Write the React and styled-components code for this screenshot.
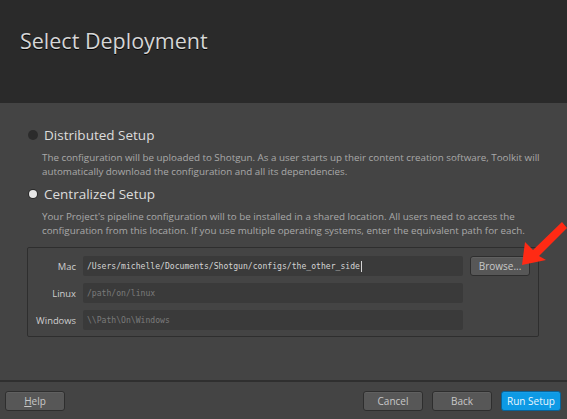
import React from "react";
import styled, { createGlobalStyle } from "styled-components";

const Global = createGlobalStyle`
  html, body { margin: 0; padding: 0; background: #444; }
  * { box-sizing: border-box; }
`;

const Window = styled.div`
  position: relative;
  width: 567px;
  height: 419px;
  display: flex;
  flex-direction: column;
  background: #444444;
  font-family: "Open Sans", "Liberation Sans", sans-serif;
  overflow: hidden;
`;

const Header = styled.header`
  height: 103px;
  flex: none;
  background: #2a2a2a;
  padding: 26px 0 0 20px;
`;

const Title = styled.h1`
  margin: 0;
  font-weight: 400;
  font-size: 21.5px;
  line-height: 30px;
  color: #d6d6d6;
  text-shadow: 0 1px 0 #000;
`;

const Body = styled.main`
  flex: 1;
  padding: 22px 28px 0 27px;
  display: flex;
  flex-direction: column;
`;

const OptionLabel = styled.label`
  display: flex;
  align-items: center;
  gap: 6px;
  font-size: 13.5px;
  line-height: 20px;
  color: #dcdcdc;
  margin-left: 1px;
`;

const Radio = styled.span`
  width: ${(p) => (p.$checked ? 8 : 10)}px;
  height: ${(p) => (p.$checked ? 8 : 10)}px;
  margin: 0 ${(p) => (p.$checked ? 1 : 0)}px;
  border-radius: 50%;
  flex: none;
  background: ${(p) => (p.$checked ? "#e6e6e6" : "#2b2b2b")};
  box-shadow: ${(p) => (p.$checked ? "0 0 0 1px #2a2a2a" : "none")};
`;

const Desc = styled.p`
  margin: 6px 0 0 15px;
  font-size: 9.8px;
  line-height: 14px;
  color: #a9a9a9;
  white-space: nowrap;
`;

const Spacer = styled.div`
  height: ${(p) => p.$h}px;
`;

const PathBox = styled.div`
  margin-top: 9px;
  border: 1px solid #2e2e2e;
  border-radius: 2px;
  padding: 8px 8px 6px 0;
  display: grid;
  grid-template-columns: 48px 1fr 60px;
  column-gap: 7px;
  row-gap: 7px;
  align-items: center;
`;

const OsLabel = styled.span`
  text-align: right;
  font-size: 9.4px;
  color: #cfcfcf;
`;

const PathInput = styled.div`
  height: 20px;
  background: #3a3a3a;
  border-radius: 2px;
  padding-left: 4px;
  display: flex;
  align-items: center;
  font-family: "DejaVu Sans Mono", "Liberation Mono", monospace;
  font-size: 8.1px;
  color: ${(p) => (p.$placeholder ? "#7a7a7a" : "#d4d4d4")};
  white-space: nowrap;
  overflow: hidden;
`;

const Caret = styled.span`
  display: inline-block;
  width: 1px;
  height: 11px;
  background: #d4d4d4;
  margin-left: 1px;
`;

const Button = styled.button`
  height: 20px;
  width: 60px;
  padding: 0;
  border-radius: 3px;
  border: 1px solid ${(p) => (p.$primary ? "#07639a" : "#2e2e2e")};
  background: ${(p) => (p.$primary ? "#0d9ae5" : "#575757")};
  color: ${(p) => (p.$primary ? "#eaf6fd" : "#c8c8c8")};
  font-family: "Open Sans", "Liberation Sans", sans-serif;
  font-size: 10px;
  line-height: 18px;
  text-align: center;
  box-shadow: inset 0 1px 0 rgba(255, 255, 255, 0.06);
`;

const Footer = styled.footer`
  height: 39px;
  flex: none;
  border-top: 2px solid #2f2f2f;
  padding: 9px 6px 0 5px;
  display: flex;
  gap: 9px;
`;

const Grow = styled.div`
  flex: 1;
`;

const Arrow = styled.svg`
  position: absolute;
  left: 0;
  top: 0;
  pointer-events: none;
`;

export default function App() {
  return (
    <Window>
      <Global />
      <Header>
        <Title>Select Deployment</Title>
      </Header>
      <Body>
        <OptionLabel>
          <Radio />
          Distributed Setup
        </OptionLabel>
        <Desc>
          The configuration will be uploaded to Shotgun. As a user starts up their content creation software, Toolkit will
          <br />
          automatically download the configuration and all its dependencies.
        </Desc>
        <Spacer $h={5} />
        <OptionLabel>
          <Radio $checked />
          Centralized Setup
        </OptionLabel>
        <Desc>
          Your Project's pipeline configuration will to be installed in a shared location. All users need to access the
          <br />
          configuration from this location. If you use multiple operating systems, enter the equivalent path for each.
        </Desc>
        <PathBox>
          <OsLabel>Mac</OsLabel>
          <PathInput>
            /Users/michelle/Documents/Shotgun/configs/the_other_side
            <Caret />
          </PathInput>
          <Button>Browse...</Button>
          <OsLabel>Linux</OsLabel>
          <PathInput $placeholder>/path/on/linux</PathInput>
          <span />
          <OsLabel>Windows</OsLabel>
          <PathInput $placeholder>\\Path\On\Windows</PathInput>
          <span />
        </PathBox>
      </Body>
      <Footer>
        <Button>
          <u>H</u>elp
        </Button>
        <Grow />
        <Button>Cancel</Button>
        <Button>Back</Button>
        <Button $primary>Run Setup</Button>
      </Footer>
      <Arrow width="567" height="419" viewBox="0 0 567 419">
        <polygon
          points="522,265 525,242 533,250 562,222 567,228 539,256 546,260"
          fill="#ff2a14"
        />
      </Arrow>
    </Window>
  );
}
